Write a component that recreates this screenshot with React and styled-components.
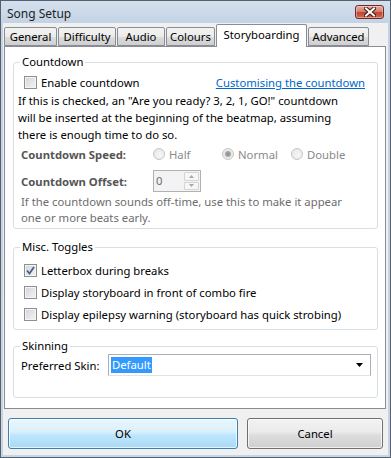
import React from 'react';
import styled, { createGlobalStyle } from 'styled-components';

const uiFont = `"Noto Sans", "Segoe UI", sans-serif`;

const GlobalStyle = createGlobalStyle`
  body {
    margin: 0;
    background: #ffffff;
  }
`;

function SongSetup() {
  const tabs = [
    { name: 'General', width: 53 },
    { name: 'Difficulty', width: 58 },
    { name: 'Audio', width: 48 },
    { name: 'Colours', width: 49 },
    { name: 'Storyboarding', width: 91, active: true },
    { name: 'Advanced', width: 61 },
  ];

  return (
    <Window>
      <TitleBar>
        <Title>Song Setup</Title>
        <CloseButton>
          <svg width="12" height="10" viewBox="0 0 12 10">
            <path d="M2 1.5 L10 8.5 M10 1.5 L2 8.5" stroke="#4a1810" strokeWidth="4" strokeLinecap="square" />
            <path d="M2 1.5 L10 8.5 M10 1.5 L2 8.5" stroke="#ffffff" strokeWidth="2" strokeLinecap="square" />
          </svg>
        </CloseButton>
      </TitleBar>

      <Client>
        <TabRow>
          {tabs.map((tab) => (
            <Tab key={tab.name} $width={tab.width} $active={tab.active}>
              {tab.name}
            </Tab>
          ))}
        </TabRow>

        <Panel>
          <Group>
            <Legend>Countdown</Legend>
            <EnableRow>
              <CheckOption>
                <CheckBox />
                Enable countdown
              </CheckOption>
              <Link>Customising the countdown</Link>
            </EnableRow>
            <Description>
              If this is checked, an "Are you ready? 3, 2, 1, GO!" countdown
              <br />
              will be inserted at the beginning of the beatmap, assuming
              <br />
              there is enough time to do so.
            </Description>
            <FieldRow>
              <FieldLabel>Countdown Speed:</FieldLabel>
              <RadioOption>
                <Radio />
                Half
              </RadioOption>
              <RadioOption>
                <Radio $checked />
                Normal
              </RadioOption>
              <RadioOption>
                <Radio />
                Double
              </RadioOption>
            </FieldRow>
            <FieldRow $offset>
              <FieldLabel>Countdown Offset:</FieldLabel>
              <SpinBox>
                <SpinValue>0</SpinValue>
                <SpinButtons>
                  <SpinButton>
                    <svg width="5" height="3" viewBox="0 0 5 3">
                      <path d="M0 3 L2.5 0 L5 3 Z" fill="#a8a8a8" />
                    </svg>
                  </SpinButton>
                  <SpinButton>
                    <svg width="5" height="3" viewBox="0 0 5 3">
                      <path d="M0 0 L2.5 3 L5 0 Z" fill="#a8a8a8" />
                    </svg>
                  </SpinButton>
                </SpinButtons>
              </SpinBox>
            </FieldRow>
            <Hint>
              If the countdown sounds off-time, use this to make it appear
              <br />
              one or more beats early.
            </Hint>
          </Group>

          <Group $top={10} $padding="4px 10px 4px 4px">
            <Legend>Misc. Toggles</Legend>
            <ToggleRow>
              <CheckOption>
                <CheckBox $checked>
                  <svg width="9" height="9" viewBox="0 0 9 9">
                    <path d="M1 4.5 L3.5 7.5 L8 1" stroke="#4b5f8f" strokeWidth="1.8" fill="none" />
                  </svg>
                </CheckBox>
                Letterbox during breaks
              </CheckOption>
            </ToggleRow>
            <ToggleRow>
              <CheckOption>
                <CheckBox />
                Display storyboard in front of combo fire
              </CheckOption>
            </ToggleRow>
            <ToggleRow>
              <CheckOption>
                <CheckBox />
                Display epilepsy warning (storyboard has quick strobing)
              </CheckOption>
            </ToggleRow>
          </Group>

          <Group $top={8} $padding="0 5px 21px 4px">
            <Legend>Skinning</Legend>
            <SkinRow>
              <SkinLabel>Preferred Skin:</SkinLabel>
              <Select>
                <Selected>Default</Selected>
                <svg width="7" height="4" viewBox="0 0 7 4">
                  <path d="M0 0 L7 0 L3.5 4 Z" fill="#000000" />
                </svg>
              </Select>
            </SkinRow>
          </Group>
        </Panel>

        <ButtonRow>
          <DialogButton $primary $width={230}>OK</DialogButton>
          <DialogButton $width={136}>Cancel</DialogButton>
        </ButtonRow>
      </Client>
    </Window>
  );
}

const Window = styled.div`
  width: 391px;
  height: 458px;
  box-sizing: border-box;
  border: 1px solid #56606c;
  background: linear-gradient(#d4e0ed 0px, #c3d3e5 22px, #c5d5e6 100%);
  display: flex;
  flex-direction: column;
  font-family: ${uiFont};
  font-size: 11.3px;
  color: #000000;
`;

const TitleBar = styled.div`
  height: 22px;
  display: flex;
  justify-content: space-between;
  align-items: flex-start;
  padding: 0 6px 0 6px;
`;

const Title = styled.div`
  margin-top: 5px;
  font-size: 12px;
  line-height: 16px;
  color: #1e1e1e;
`;

const CloseButton = styled.div`
  margin-top: 4px;
  width: 29px;
  height: 14px;
  box-sizing: border-box;
  border: 1px solid #6e2b22;
  border-radius: 3px;
  background: linear-gradient(#e6aca2 0%, #d47f70 45%, #c24430 55%, #cf6a55 100%);
  box-shadow: inset 0 0 0 1px rgba(255, 255, 255, 0.35);
  display: flex;
  align-items: center;
  justify-content: center;
`;

const Client = styled.div`
  flex: 1;
  margin: 0 2px 2px;
  background: #f0f0f0;
  display: flex;
  flex-direction: column;
  padding-left: 1px;
`;

const TabRow = styled.div`
  display: flex;
  align-items: flex-end;
  gap: 1px;
  padding-top: 1px;
  position: relative;
  z-index: 1;
`;

const Tab = styled.div`
  width: ${(p) => p.$width}px;
  height: ${(p) => (p.$active ? 23 : 19)}px;
  margin-bottom: ${(p) => (p.$active ? -1 : 0)}px;
  box-sizing: border-box;
  border: 1px solid #898c95;
  border-bottom: ${(p) => (p.$active ? 'none' : '1px solid #898c95')};
  border-radius: 2px 2px 0 0;
  background: ${(p) =>
    p.$active ? '#ffffff' : 'linear-gradient(#f3f3f3, #ebebeb 50%, #dddddd 51%, #cfcfcf)'};
  display: flex;
  justify-content: center;
  align-items: ${(p) => (p.$active ? 'flex-start' : 'center')};
  padding-top: ${(p) => (p.$active ? 2 : 0)}px;
  line-height: 16px;
  white-space: nowrap;
`;

const Panel = styled.div`
  width: 382px;
  height: 363px;
  box-sizing: border-box;
  border: 1px solid #898c95;
  background: #ffffff;
  padding: 7px 7px 0 8px;
  display: flex;
  flex-direction: column;
`;

const Group = styled.fieldset`
  margin: ${(p) => p.$top || 0}px 0 0 0;
  border: 1px solid #d5dfe5;
  border-radius: 3px;
  padding: ${(p) => p.$padding || '3px 12px 2px 4px'};
  min-width: 0;
`;

const Legend = styled.legend`
  margin-left: 2px;
  padding: 0 2px;
  line-height: 16px;
  font-size: 11.3px;
`;

const EnableRow = styled.div`
  height: 19px;
  display: flex;
  justify-content: space-between;
  align-items: center;
  padding-left: 6px;
`;

const CheckOption = styled.label`
  display: flex;
  align-items: center;
  gap: 4px;
  white-space: nowrap;
`;

const CheckBox = styled.span`
  width: 13px;
  height: 13px;
  box-sizing: border-box;
  border: 1px solid #8e8f8f;
  background: linear-gradient(135deg, #d0d4da, #f4f4f4);
  box-shadow: inset 0 0 0 1px #f4f4f4;
  display: flex;
  align-items: center;
  justify-content: center;
`;

const Link = styled.span`
  color: #0066cc;
  text-decoration: underline;
  white-space: nowrap;
`;

const Description = styled.div`
  line-height: 17px;
  white-space: nowrap;
`;

const FieldRow = styled.div`
  display: grid;
  grid-template-columns: 132px 69px 69px 1fr;
  align-items: center;
  height: ${(p) => (p.$offset ? 22 : 20)}px;
  margin-top: ${(p) => (p.$offset ? 6 : 1)}px;
  padding-left: 3px;
`;

const FieldLabel = styled.div`
  font-weight: bold;
  color: #555555;
  white-space: nowrap;
`;

const RadioOption = styled.div`
  display: flex;
  align-items: center;
  gap: 4px;
  color: #8a8a8a;
`;

const Radio = styled.span`
  width: 12px;
  height: 12px;
  box-sizing: border-box;
  border-radius: 50%;
  border: 1px solid #c6c6c6;
  background: ${(p) =>
    p.$checked
      ? 'radial-gradient(circle, #8c8c8c 0, #a6a6a6 2.5px, #e8e8e8 3.5px, #f0f0f0 100%)'
      : 'radial-gradient(circle at 60% 60%, #f7f7f7, #e2e2e2)'};
`;

const SpinBox = styled.div`
  width: 48px;
  height: 22px;
  box-sizing: border-box;
  border: 1px solid #aeb2b6;
  background: #f3f3f3;
  display: flex;
  justify-content: space-between;
`;

const SpinValue = styled.div`
  padding: 2px 0 0 2px;
  color: #6d6d6d;
  line-height: 16px;
`;

const SpinButtons = styled.div`
  width: 15px;
  display: flex;
  flex-direction: column;
  gap: 1px;
  padding: 1px 1px 1px 0;
`;

const SpinButton = styled.div`
  flex: 1;
  border: 1px solid #d4d4d4;
  border-radius: 1px;
  background: #f6f6f6;
  display: flex;
  align-items: center;
  justify-content: center;
`;

const Hint = styled.div`
  margin-top: 2px;
  padding-left: 3px;
  line-height: 16px;
  color: #6d6d6d;
  white-space: nowrap;
`;

const ToggleRow = styled.div`
  height: 22px;
  display: flex;
  align-items: center;
  padding-left: 6px;
`;

const SkinRow = styled.div`
  height: 22px;
  display: flex;
  align-items: center;
  padding-left: 3px;
`;

const SkinLabel = styled.div`
  width: 87px;
  white-space: nowrap;
`;

const Select = styled.div`
  width: 263px;
  height: 22px;
  box-sizing: border-box;
  border: 1px solid #abadb3;
  border-bottom-color: #dfe3e8;
  background: #ffffff;
  display: flex;
  align-items: center;
  justify-content: space-between;
  padding: 0 7px 0 2px;
`;

const Selected = styled.span`
  background: #3399ff;
  color: #ffffff;
  padding: 0 1px;
  line-height: 16px;
`;

const ButtonRow = styled.div`
  display: flex;
  gap: 9px;
  padding: 9px 0 0 4px;
`;

const DialogButton = styled.div`
  width: ${(p) => p.$width}px;
  height: 31px;
  box-sizing: border-box;
  border: 1px solid ${(p) => (p.$primary ? '#3c7fb1' : '#707070')};
  border-radius: 3px;
  background: ${(p) =>
    p.$primary
      ? 'linear-gradient(#eaf6fd 0%, #d9f0fc 45%, #bee6fd 55%, #a7d9f5 100%)'
      : 'linear-gradient(#f2f2f2 0%, #ebebeb 45%, #dddddd 55%, #cfcfcf 100%)'};
  box-shadow: inset 0 0 0 1px rgba(255, 255, 255, 0.7);
  display: flex;
  align-items: center;
  justify-content: center;
`;

export default function App() {
  return (
    <>
      <GlobalStyle />
      <SongSetup />
    </>
  );
}
